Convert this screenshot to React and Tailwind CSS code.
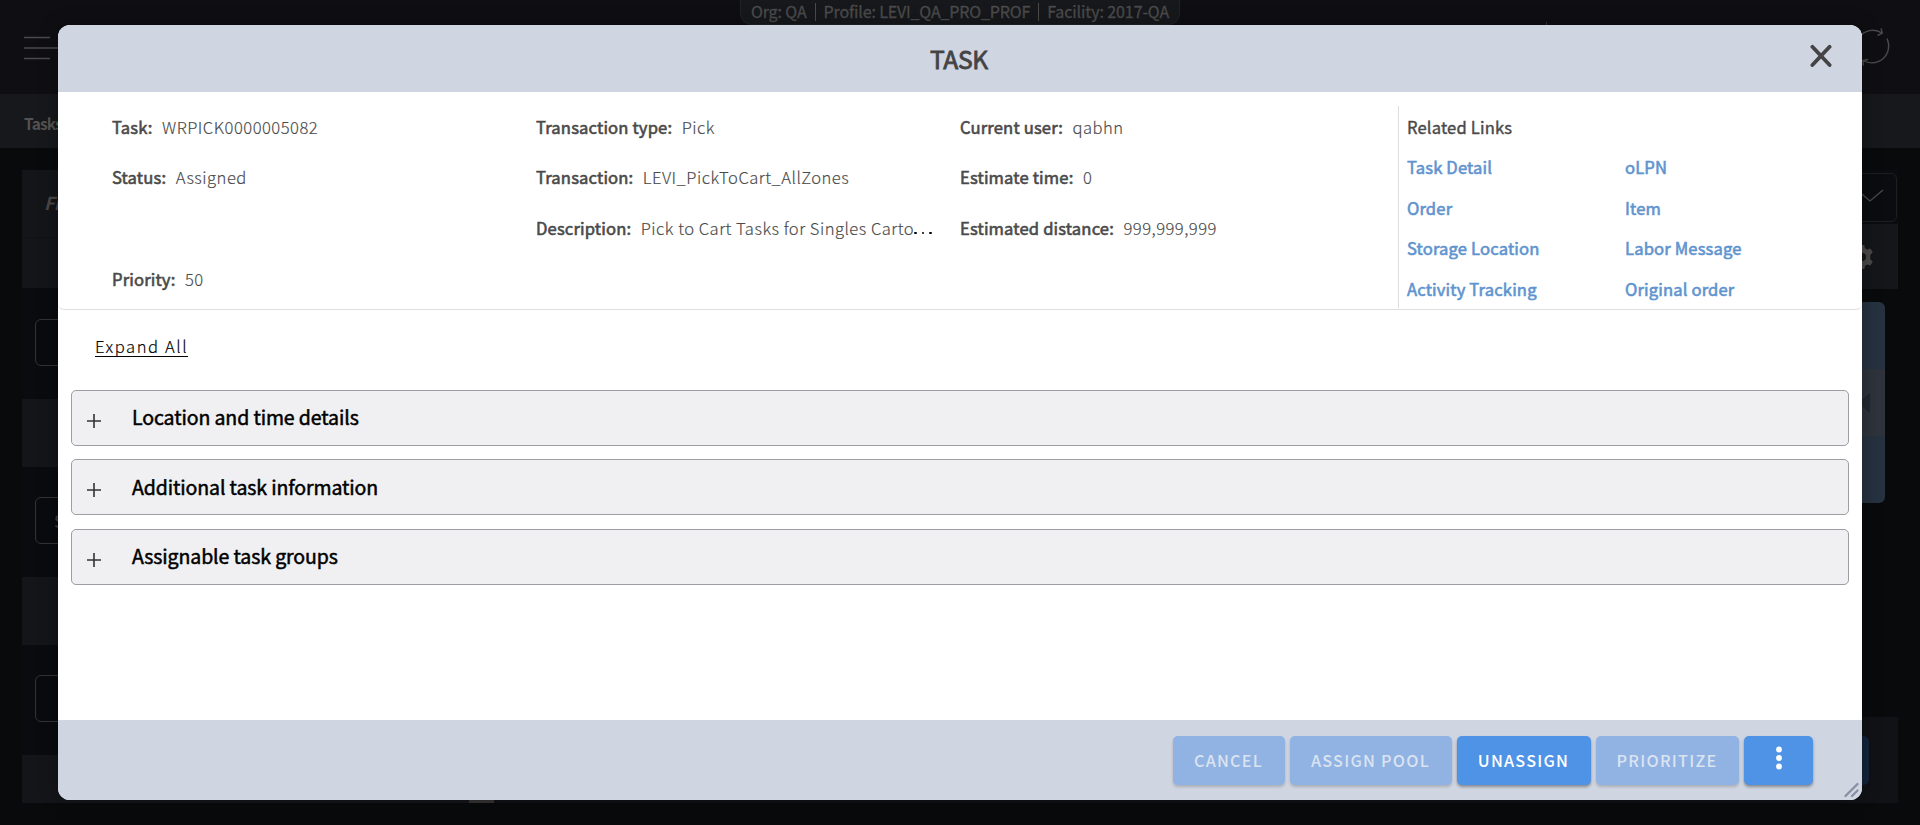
import React from "react";

const fields = [
  [["Task:", "WRPICK0000005082"], ["Status:", "Assigned"], null, ["Priority:", "50"]],
  [
    ["Transaction type:", "Pick"],
    ["Transaction:", "LEVI_PickToCart_AllZones"],
    ["Description:", "Pick to Cart Tasks for Singles Carto", true],
  ],
  [["Current user:", "qabhn"], ["Estimate time:", "0"], ["Estimated distance:", "999,999,999"]],
];

const links = [
  ["Task Detail", "oLPN"],
  ["Order", "Item"],
  ["Storage Location", "Labor Message"],
  ["Activity Tracking", "Original order"],
];

const sections = ["Location and time details", "Additional task information", "Assignable task groups"];

function Field({ item }) {
  if (!item) return <div className="h-[51px]" />;
  const [label, value, cut] = item;
  return (
    <div className="flex h-[51px] items-center whitespace-nowrap first:h-[50px]">
      <span className="text-[16.600px] tracking-[0.15px] [-webkit-text-stroke:0.6px_#4a4a4a]">{label}</span>
      <span className="ml-[9.500px] text-[16.600px] font-light tracking-[0.48px] [-webkit-text-stroke:0.15px_#4a4a4a]">{value}</span>
      {cut && (
        <span className="flex gap-[5px] self-center pt-[9px]">
          <i className="size-[2.500px] rounded-full bg-black" />
          <i className="size-[2.500px] rounded-full bg-black" />
          <i className="size-[2.500px] rounded-full bg-black" />
        </span>
      )}
    </div>
  );
}

function FilterInput({ text }) {
  return (
    <div className="flex h-[110px] items-start bg-[#0a0b0e] pl-[13px] pt-[30px]">
      <div className="flex h-[47px] w-[200px] items-center rounded-md border border-[#333333] pl-[18px] text-[17px] font-medium text-[#3a3a3a]">
        {text}
      </div>
    </div>
  );
}

function Backdrop() {
  return (
    <div className="flex h-[825px] w-full flex-col bg-[#090a0c]">
      <header className="flex h-[94px] shrink-0 items-start bg-[#0f0e12]">
        <svg className="ml-6 mt-9 h-6 w-10" viewBox="0 0 40 24" stroke="#4b4a4b" strokeWidth="1.3">
          <path d="M0 1.500H26M0 12H40M0 22.500H26" />
        </svg>
        <div className="ml-[676px] flex h-[25px] w-[440px] items-start justify-center gap-2 rounded-b-xl border border-t-0 border-[#222326] bg-[#16181b] pt-[2px] text-[16px] leading-[18px] text-[#4b4b4b] [-webkit-text-stroke:0.3px_#4b4b4b]">
          <span className="tracking-[-0.1px]">Org: QA</span>
          <i className="mt-px h-[18px] w-px bg-[#4b4b4b]" />
          <span className="tracking-[-0.15px]">Profile: LEVI_QA_PRO_PROF</span>
          <i className="mt-px h-[18px] w-px bg-[#4b4b4b]" />
          <span className="tracking-[-0.1px]">Facility: 2017-QA</span>
        </div>
        <i className="ml-[366px] mt-[22px] h-[50px] w-px bg-[#333236]" />
        <svg className="ml-auto mr-[27px] mt-7 h-10 w-10" viewBox="0 0 40 40" fill="none" stroke="#4b4a4b" strokeWidth="1.4">
          <path d="M6 9.500A17 17 0 0 1 29 5M28 0.500L29.300 5.200L24.500 7.500M34 10.500A17 17 0 0 1 10 32.500M10.500 37.500L9.800 32.500L15 31.500" />
        </svg>
      </header>
      <div className="flex h-[54px] shrink-0 items-center bg-[#16181b] pl-6 pt-[5px] text-[15.500px] font-bold tracking-[-0.9px] text-[#545252]">
        Tasks
      </div>
      <div className="mt-[22px] flex h-[633px] shrink-0 justify-between pl-[22px]">
        <aside className="w-[447px]">
          <div className="h-[68px] border-b border-[#0f1114] bg-[#131519] pl-[22px] pt-5 text-[18px] font-bold italic leading-6 tracking-[-0.5px] text-[#4a4747]">
            Filter
          </div>
          <div className="h-[50px] bg-[#131519]" />
          <div className="bg-[#0a0b0e] pt-px">
            <FilterInput />
          </div>
          <div className="h-[68px] bg-[#141519]" />
          <FilterInput text="Select" />
          <div className="h-[68px] bg-[#141519]" />
          <FilterInput />
          <div className="h-12 bg-[#141519]" />
        </aside>
        <div className="flex items-end">
          <div className="h-[3px] w-[25px] bg-[#353433]" />
        </div>
        <main className="flex w-[1404px] flex-col">
          <div className="flex h-[54px] justify-end bg-[#0b0c0f] pr-px pt-[3px]">
            <div className="flex h-[49px] w-[200px] items-center justify-end rounded-md border border-[#1c1e22] pb-[3px] pr-3">
              <svg className="h-4 w-7" viewBox="0 0 28 16" fill="none" stroke="#4b4a4b" strokeWidth="1.3">
                <path d="M1 2L14 13L27 2" />
              </svg>
            </div>
          </div>
          <div className="flex h-[65px] items-center justify-end bg-[#151619] pr-6">
            <svg className="size-6" viewBox="0 0 24 24" fill="#4a4848">
              <path
                fillRule="evenodd"
                d="M9.600 0h4.800l.6 3.200 2.300 1.300 3.100-1 2.400 4.100-2.500 2.200v4.400l2.500 2.200-2.400 4.100-3.100-1-2.300 1.300-.6 3.200H9.600L9 20.800l-2.300-1.300-3.100 1-2.400-4.100 2.500-2.200V9.800L1.200 7.600l2.400-4.100 3.100 1L9 3.200zM12 8a4 4 0 1 0 0 8 4 4 0 0 0 0-8z"
              />
            </svg>
          </div>
          <div className="mr-[13px] mt-[13px] w-[180px] self-end overflow-hidden rounded-md bg-[#263240]">
            <div className="h-[67px]" />
            <div className="flex h-[67px] items-center justify-end bg-[#2e333c] pr-[15px]">
              <svg className="h-5 w-3" viewBox="0 0 12 20" fill="#222830">
                <path d="M12 0V20L0 10z" />
              </svg>
            </div>
            <div className="h-[67px]" />
          </div>
          <div className="mt-auto flex h-[86px] items-start justify-end bg-[#111216] pr-[29px] pt-[19px]">
            <div className="h-[49px] w-24 rounded-md bg-[#14233a]" />
          </div>
        </main>
        <div className="w-[22px]" />
      </div>
    </div>
  );
}

const btn =
  "flex h-[49px] items-center justify-center rounded-[5px] text-[16.200px] font-medium tracking-[1.25px]";
const active = "bg-[#4f93e6] text-white shadow-[0_2px_3px_rgba(0,0,0,0.35)]";
const disabled = "bg-[#90b3e3] text-[#dbe3f0] shadow-[0_2px_3px_rgba(0,0,0,0.18)]";

export default function App() {
  return (
    <div className="relative h-[825px] w-full overflow-hidden font-['Noto_Sans_CJK_SC',sans-serif]">
      <Backdrop />
      <div className="absolute left-[58px] top-[25px] flex h-[775px] w-[1804px] flex-col overflow-hidden rounded-xl bg-white text-[#4a4a4a] shadow-[0_0_20px_rgba(0,0,0,0.3)]">
        <header className="flex h-[67px] shrink-0 items-center bg-[#cfd5e1]">
          <div className="w-20" />
          <h1 className="grow pr-[2px] text-center text-[24.600px] tracking-[-0.3px] text-[#444444] [-webkit-text-stroke:0.8px_#444444]">TASK</h1>
          <div className="flex w-20 justify-end pr-[30px]">
            <svg className="mb-1.5 h-6 w-[22px]" viewBox="0 0 22 24" stroke="#444444" strokeWidth="3.800" strokeLinecap="round">
              <path d="M2.400 2.800L19.600 21M19.600 2.800L2.400 21" />
            </svg>
          </div>
        </header>

        <section className="flex h-[218px] shrink-0 rounded-b-md border-b border-[#dedede] pl-[54px]">
          {fields.map((col, i) => (
            <div key={i} className="w-[424px] pt-[10px]">
              {col.map((item, j) => (
                <Field key={j} item={item} />
              ))}
            </div>
          ))}
          <div className="ml-[14px] mt-[14px] flex h-[202px] grow flex-col border-l border-[#dedede] pl-2 text-[16.600px] tracking-[0.15px]">
            <div className="flex h-[41px] shrink-0 items-center pt-px [-webkit-text-stroke:0.4px_#4a4a4a]">Related Links</div>
            {links.map(([a, b]) => (
              <div key={a} className="flex h-[40.700px] shrink-0 items-center text-[#6094cf] [-webkit-text-stroke:0.6px_#6094cf]">
                <a className="w-[218px]">{a}</a>
                <a>{b}</a>
              </div>
            ))}
          </div>
        </section>

        <div className="flex h-20 shrink-0 items-start pl-[37px] pt-[27px]">
          <a className="h-5 border-b border-black text-[16.600px] font-light leading-[19px] tracking-[1.55px] text-black [-webkit-text-stroke:0.15px_black]">
            Expand All
          </a>
        </div>

        <section className="flex grow flex-col gap-[13.400px] px-[13px]">
          {sections.map((s) => (
            <div key={s} className="flex h-14 shrink-0 items-center rounded-[5px] border border-[#9d9ea3] bg-[#f0f0f2] pl-[15px]">
              <svg className="mt-[6px] size-[14px]" viewBox="0 0 14 14" stroke="#333333" strokeWidth="1.600">
                <path d="M0 7H14M7 0V14" />
              </svg>
              <span className="pb-[2px] pl-[31px] text-[19.500px] tracking-[-0.1px] text-black [-webkit-text-stroke:0.5px_black]">{s}</span>
            </div>
          ))}
        </section>

        <footer className="relative flex h-20 shrink-0 justify-end gap-[5px] bg-[#cfd5e1] pr-[49px] pt-4">
          <button className={btn + " w-28 pr-px " + disabled}>CANCEL</button>
          <button className={btn + " w-[162px] pr-px " + disabled}>ASSIGN POOL</button>
          <button className={btn + " w-[134px] pr-px " + active}>UNASSIGN</button>
          <button className={btn + " w-[143px] pr-px " + disabled}>PRIORITIZE</button>
          <button className={btn + " w-[69px] " + active}>
            <svg className="mb-[5px] h-6 w-1.5" viewBox="0 0 6 24" fill="white">
              <circle cx="3" cy="3.500" r="2.900" />
              <circle cx="3" cy="12" r="2.900" />
              <circle cx="3" cy="20.500" r="2.900" />
            </svg>
          </button>
          <svg className="absolute bottom-0.5 right-0.5 size-4" viewBox="0 0 16 16" stroke="#8a90a3" strokeWidth="2.300" strokeLinecap="round">
            <path d="M1.500 14L13.500 2M8 14L13.500 8.500" />
          </svg>
        </footer>
      </div>
    </div>
  );
}
